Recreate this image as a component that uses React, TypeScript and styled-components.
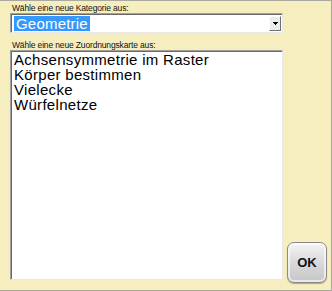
import styled, { createGlobalStyle } from "styled-components";

const Global = createGlobalStyle`
  html, body { margin: 0; padding: 0; }
  body { font-family: "Liberation Sans", Arial, sans-serif; }
`;

const Dialog = styled.div`
  box-sizing: border-box;
  width: 332px;
  height: 291px;
  background: #f6eebe;
  border-top: 1px solid #a9a9a0;
  border-right: 1px solid #a9a9a0;
  border-bottom: 1px solid #a9a9a0;
  padding: 2px 0 0 10px;
  display: grid;
  grid-template-columns: 273px 1fr;
  grid-template-rows: auto 1fr;
  column-gap: 4px;
`;

const Main = styled.div`
  display: flex;
  flex-direction: column;
  grid-column: 1;
  grid-row: 1 / 3;
  padding-bottom: 10px;
`;

const Label = styled.div`
  font-size: 8.5px;
  line-height: 10px;
  color: #111;
  padding-left: 2px;
  letter-spacing: -0.15px;
`;

const Inset = styled.div`
  box-sizing: border-box;
  background: #fff;
  border-top: 1px solid #a0a0a0;
  border-left: 1px solid #a0a0a0;
  border-right: 1px solid #e8e8e8;
  border-bottom: 1px solid #e8e8e8;
  box-shadow: inset 1px 1px 0 #696969;
`;

const Select = styled(Inset)`
  height: 20px;
  display: flex;
  align-items: stretch;
  padding: 2px 1px 1px 3px;
  margin-bottom: 7px;
`;

const Selected = styled.span`
  background: #3399ff;
  color: #fff;
  font-size: 15px;
  line-height: 15px;
  padding: 0 2px;
  height: 15px;
  align-self: flex-start;
  letter-spacing: 0.2px;
`;

const Spacer = styled.div`
  flex: 1;
`;

const Arrow = styled.div`
  box-sizing: border-box;
  width: 12px;
  background: #ececec;
  border-top: 1px solid #fff;
  border-left: 1px solid #fff;
  border-right: 1px solid #6f6f6f;
  border-bottom: 1px solid #6f6f6f;
  display: flex;
  align-items: center;
  justify-content: center;
`;

const List = styled(Inset)`
  flex: 1;
  padding: 1px 3px;
`;

const Item = styled.div`
  font-size: 15px;
  line-height: 15px;
  letter-spacing: 0.3px;
  color: #000;
`;

const Side = styled.div`
  grid-column: 2;
  grid-row: 2;
  display: flex;
  align-items: flex-end;
  padding-bottom: 7px;
`;

const OkButton = styled.button`
  box-sizing: border-box;
  width: 40px;
  height: 41px;
  border-radius: 7px;
  border: 1px solid #8a8a8a;
  background: linear-gradient(#f4f4f4 0%, #d9d9d9 50%, #c6c6c6 100%);
  box-shadow: inset 0 0 0 2px rgba(255, 255, 255, 0.6), 0 1px 1px rgba(0, 0, 0, 0.3);
  font-family: "Liberation Sans", Arial, sans-serif;
  font-weight: bold;
  font-size: 13px;
  color: #111;
  padding: 0;
`;

const items = ["Achsensymmetrie im Raster", "Körper bestimmen", "Vielecke", "Würfelnetze"];

export default function App() {
  return (
    <>
      <Global />
      <Dialog>
        <Main>
          <Label>Wähle eine neue Kategorie aus:</Label>
          <Select>
            <Selected>Geometrie</Selected>
            <Spacer />
            <Arrow>
              <svg width="5" height="4" viewBox="0 0 5 4">
                <path d="M0 0h5v1H4v1H3v1H2V2H1V1H0z" fill="#000" />
              </svg>
            </Arrow>
          </Select>
          <Label>Wähle eine neue Zuordnungskarte aus:</Label>
          <List>
            {items.map((t) => (
              <Item key={t}>{t}</Item>
            ))}
          </List>
        </Main>
        <Side>
          <OkButton>OK</OkButton>
        </Side>
      </Dialog>
    </>
  );
}
